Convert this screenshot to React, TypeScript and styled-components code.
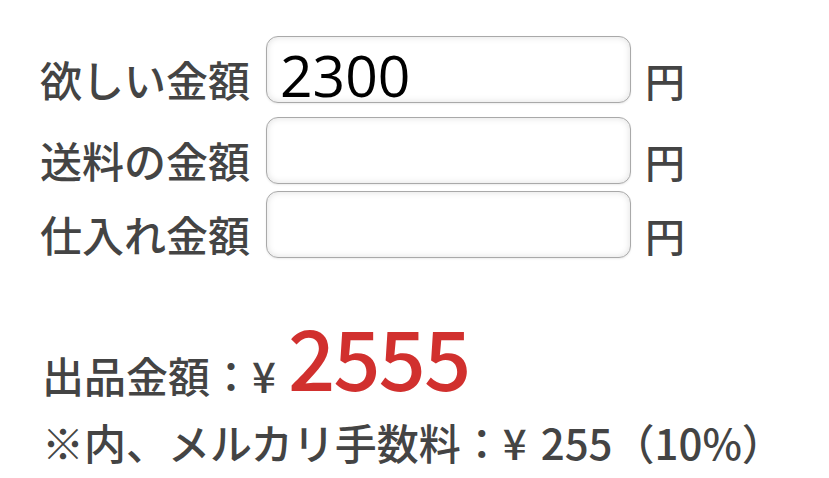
import React from "react";
import styled, { createGlobalStyle } from "styled-components";

const GlobalStyle = createGlobalStyle`
  html, body { margin: 0; padding: 0; background: #fff; }
  body { font-family: "Noto Sans CJK JP", "Noto Sans", sans-serif; color: #444; }
`;

const Page = styled.div`
  padding: 36px 0 0 40px;
  width: 829px;
  height: 478px;
  box-sizing: border-box;
  overflow: hidden;
`;

const Form = styled.div`
  display: flex;
  flex-direction: column;
`;

const Row = styled.div<{ $top: number }>`
  display: flex;
  align-items: baseline;
  margin-top: ${(p) => p.$top}px;
`;

const Label = styled.span`
  font-size: 42px;
  font-weight: 500;
  line-height: 1;
  width: 212px;
  white-space: nowrap;
  margin-right: 14px;
`;

const Input = styled.input`
  box-sizing: border-box;
  width: 365px;
  height: 67px;
  border: 1px solid #a9a9a9;
  border-radius: 12px;
  background: #fff;
  box-shadow: inset 0 0 7px rgba(0, 0, 0, 0.13), 0 1px 2px rgba(0, 0, 0, 0.08);
  padding: 11px 12px 0 13px;
  font-family: "Open Sans", "Noto Sans", sans-serif;
  font-size: 57px;
  line-height: 54px;
  color: #000;
  outline: none;
`;

const Unit = styled.span`
  font-size: 40px;
  font-weight: 500;
  line-height: 1;
  margin-left: 14px;
`;

const Result = styled.div`
  margin-top: 58px;
  margin-left: 2px;
  display: flex;
  flex-direction: column;
`;

const PriceLine = styled.div`
  display: flex;
  align-items: baseline;
  font-size: 42px;
  font-weight: 500;
  line-height: 1;
  white-space: nowrap;
`;

const Yen = styled.span`
  margin-right: 12px;
`;

const Price = styled.span`
  font-size: 83px;
  font-weight: 500;
  color: #d1302e;
  letter-spacing: -2px;
  position: relative;
  top: -2px;
`;

const FeeLine = styled.div`
  margin-top: 22px;
  font-size: 42px;
  font-weight: 500;
  line-height: 1;
  white-space: nowrap;
`;

const FeeYen = styled.span`
  margin-right: 14px;
`;

export default function App() {
  const rows = [
    { label: "欲しい金額", value: "2300", top: 0 },
    { label: "送料の金額", value: "", top: 14 },
    { label: "仕入れ金額", value: "", top: 7 },
  ];
  return (
    <>
      <GlobalStyle />
      <Page>
        <Form>
          {rows.map((r) => (
            <Row key={r.label} $top={r.top}>
              <Label>{r.label}</Label>
              <Input type="text" defaultValue={r.value} />
              <Unit>円</Unit>
            </Row>
          ))}
        </Form>
        <Result>
          <PriceLine>
            出品金額：<Yen>¥</Yen>
            <Price>2555</Price>
          </PriceLine>
          <FeeLine>
            ※内、メルカリ手数料：<FeeYen>¥</FeeYen>255（10%）
          </FeeLine>
        </Result>
      </Page>
    </>
  );
}
